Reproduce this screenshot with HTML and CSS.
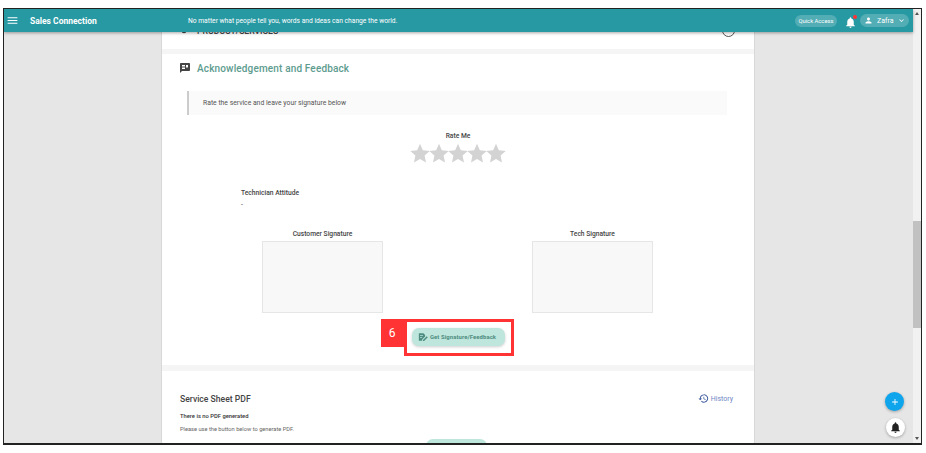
FILE: index.html
```html
<!DOCTYPE html>
<html lang="en">
<head>
    <meta charset="UTF-8">
    <meta name="viewport" content="width=device-width, initial-scale=1.0">
    <title>Sales Connection</title>
    <link rel="stylesheet" href="styles.css">
</head>
<body>
    <div class="frame">
        <div class="viewport">
            <header class="topbar">
                <svg class="menu-icon" viewBox="0 0 24 24"><path d="M3 18h18v-2H3v2zm0-5h18v-2H3v2zm0-7v2h18V6H3z"/></svg>
                <span class="brand">Sales Connection</span>
                <span class="quote">No matter what people tell you, words and ideas can change the world.</span>
                <span class="quick">Quick Access</span>
                <span class="bell">
                    <svg viewBox="0 0 24 24"><path d="M12 22c1.100 0 2-.9 2-2h-4c0 1.100.9 2 2 2zm6-6v-5c0-3.070-1.640-5.640-4.500-6.320V4c0-.830-.670-1.500-1.500-1.500s-1.500.670-1.500 1.500v.680C7.630 5.360 6 7.920 6 11v5l-2 2v1h16v-1l-2-2z"/></svg>
                    <i class="bell-dot"></i>
                </span>
                <span class="user">
                    <svg viewBox="0 0 24 24"><path d="M12 12c2.210 0 4-1.790 4-4s-1.790-4-4-4-4 1.790-4 4 1.790 4 4 4zm0 2c-2.670 0-8 1.340-8 4v2h16v-2c0-2.660-5.330-4-8-4z"/></svg>
                    Zafra
                    <svg viewBox="0 0 24 24"><path d="M7.410 8.590 12 13.170l4.590-4.580L18 10l-6 6-6-6z"/></svg>
                </span>
            </header>

            <main class="page">
                <div class="sheet">
                    <section class="card card-top">
                        <div class="product-title">
                            <svg viewBox="0 0 24 24"><circle cx="12" cy="12" r="7"/></svg>
                            PRODUCT/SERVICES
                            <span class="collapse-btn"></span>
                        </div>
                    </section>

                    <section class="card card-feedback">
                        <h2 class="section-title">
                            <svg viewBox="0 0 24 24"><path d="M20 2H4c-1.100 0-2 .9-2 2v18l4-4h14c1.100 0 2-.9 2-2V4c0-1.100-.9-2-2-2zM6 14v-2h6v2H6zm0-3V9h6v2H6zm0-3V6h6v2H6zm12 3h-4V6h4v5z"/></svg>
                            Acknowledgement and Feedback
                        </h2>
                        <p class="note">Rate the service and leave your signature below</p>

                        <div class="rating">
                            <div class="label">Rate Me</div>
                            <div class="stars">
                                <svg viewBox="0 0 24 24"><path d="M12 1l3.400 7.600 8.300.9-6.200 5.600 1.700 8.200L12 19.100l-7.200 4.200 1.700-8.200L.3 9.500l8.300-.9z"/></svg>
                                <svg viewBox="0 0 24 24"><path d="M12 1l3.400 7.600 8.300.9-6.200 5.600 1.700 8.200L12 19.100l-7.200 4.200 1.700-8.200L.3 9.500l8.300-.9z"/></svg>
                                <svg viewBox="0 0 24 24"><path d="M12 1l3.400 7.600 8.300.9-6.200 5.600 1.700 8.200L12 19.100l-7.200 4.200 1.700-8.200L.3 9.500l8.300-.9z"/></svg>
                                <svg viewBox="0 0 24 24"><path d="M12 1l3.400 7.600 8.300.9-6.200 5.600 1.700 8.200L12 19.100l-7.200 4.200 1.700-8.200L.3 9.500l8.300-.9z"/></svg>
                                <svg viewBox="0 0 24 24"><path d="M12 1l3.400 7.600 8.300.9-6.200 5.600 1.700 8.200L12 19.100l-7.200 4.200 1.700-8.200L.3 9.500l8.300-.9z"/></svg>
                            </div>
                        </div>

                        <div class="attitude">
                            <div class="label">Technician Attitude</div>
                            <div class="dash">-</div>
                        </div>

                        <div class="signatures">
                            <div class="signature">
                                <div class="label">Customer Signature</div>
                                <div class="sign-box"></div>
                            </div>
                            <div class="signature">
                                <div class="label">Tech Signature</div>
                                <div class="sign-box"></div>
                            </div>
                        </div>

                        <div class="action">
                            <div class="callout">
                                <span class="step">6</span>
                                <span class="highlight"></span>
                                <button class="btn">
                                    <svg viewBox="0 0 24 24"><path fill-rule="evenodd" d="M2 3h11l4 4v4l-7 7v3H2V3zm3 5v1.500h7V8H5zm0 4v1.500h5V12H5z"/><path d="M12 19l9-9 2.500 2.500-9 9H12z"/></svg>
                                    Get Signature/Feedback
                                </button>
                            </div>
                        </div>
                    </section>

                    <section class="card card-pdf">
                        <div class="pdf-head">
                            <h3>Service Sheet PDF</h3>
                            <span class="history">
                                <svg viewBox="0 0 24 24"><path d="M13 3a9 9 0 0 0-9 9H1l3.900 3.900L9 12H6a7 7 0 1 1 2.100 4.900l-1.400 1.400A9 9 0 1 0 13 3zm-1 5v5l4.300 2.500.7-1.200-3.500-2.100V8H12z"/></svg>
                                History
                            </span>
                        </div>
                        <div class="pdf-none">There is no PDF generated</div>
                        <div class="pdf-help">Please use the button below to generate PDF.</div>
                        <div class="pdf-action"><span class="pdf-btn"></span></div>
                    </section>
                </div>
            </main>

            <div class="scrollbar"><span class="thumb"></span></div>

            <div class="fabs">
                <span class="fab fab-add">
                    <svg viewBox="0 0 24 24"><path d="M19 13h-6v6h-2v-6H5v-2h6V5h2v6h6v2z"/></svg>
                </span>
                <span class="fab fab-bell">
                    <svg viewBox="0 0 24 24"><path d="M12 22c1.100 0 2-.9 2-2h-4c0 1.100.9 2 2 2zm6-6v-5c0-3.070-1.640-5.640-4.500-6.320V4c0-.830-.670-1.500-1.500-1.500s-1.500.670-1.500 1.500v.680C7.630 5.360 6 7.920 6 11v5l-2 2v1h16v-1l-2-2z"/></svg>
                </span>
            </div>
        </div>
    </div>
</body>
</html>
```

FILE: styles.css
```css
* {
    box-sizing: border-box;
}
body {
    margin: 0;
    height: 453px;
    overflow: hidden;
    background: #fff;
    font-family: 'Roboto', 'Liberation Sans', sans-serif;
    padding: 8px 4px 8px 3px;
}
.frame {
    height: 437px;
    border: 1px solid #222;
    border-bottom-width: 2px;
}
.viewport {
    position: relative;
    height: 100%;
    display: flex;
    overflow: hidden;
    background: #e6e6e6;
}

/* top bar */
.topbar {
    position: absolute;
    top: 0;
    left: 0;
    right: 8px;
    z-index: 2;
    height: 23px;
    display: flex;
    align-items: center;
    background: #2799a3;
    color: #fff;
    box-shadow: 0 1px 3px rgba(0, 0, 0, 0.35);
}
.menu-icon {
    width: 13px;
    height: 13px;
    margin-left: 2px;
    fill: #fff;
}
.brand {
    margin-left: 11px;
    width: 158px;
    font-size: 8.5px;
    font-weight: 700;
}
.quote {
    flex: 1;
    font-size: 6.7px;
}
.quick {
    width: 42px;
    height: 12px;
    line-height: 12px;
    text-align: center;
    font-size: 5.8px;
    border-radius: 6px;
    background: rgba(255, 255, 255, 0.2);
}
.bell {
    position: relative;
    width: 12px;
    height: 13px;
    margin-left: 7px;
}
.bell svg {
    width: 13px;
    height: 13px;
    fill: #fff;
}
.bell-dot {
    position: absolute;
    top: 1px;
    right: -1px;
    width: 4px;
    height: 4px;
    border-radius: 50%;
    background: #f33;
}
.user {
    display: flex;
    align-items: center;
    gap: 4px;
    flex: none;
    width: 49px;
    height: 13px;
    margin: 0 4px 0 4px;
    padding-left: 4px;
    font-size: 7px;
    border-radius: 7px;
    background: rgba(255, 255, 255, 0.2);
}
.user svg {
    width: 9px;
    height: 9px;
    fill: #fff;
}

/* page */
.page {
    flex: 1;
    display: flex;
    justify-content: center;
    padding-right: 1px;
}
.sheet {
    width: 594px;
    flex: none;
    background: #f5f5f5;
    border-left: 1px solid #d8d8d8;
    border-right: 1px solid #d8d8d8;
}
.card {
    background: #fff;
}
.card-top {
    height: 40px;
    margin-bottom: 5px;
    padding: 15px 19px 0 18px;
}
.product-title {
    display: flex;
    align-items: center;
    font-size: 8.6px;
    font-weight: 500;
    color: #444;
    gap: 9px;
}
.product-title svg {
    width: 8px;
    height: 8px;
    fill: #444;
}
.collapse-btn {
    margin-left: auto;
    width: 13px;
    height: 13px;
    border: 1px solid #555;
    border-radius: 50%;
}
.card-feedback {
    height: 311px;
    margin-bottom: 6px;
    padding-top: 8px;
}
.section-title {
    display: flex;
    align-items: center;
    gap: 6px;
    margin: 0 0 0 17px;
    font-size: 10px;
    font-weight: 500;
    letter-spacing: 0.15px;
    color: #5d9c8f;
}
.section-title svg {
    width: 12px;
    height: 12px;
    fill: #444;
}
.note {
    margin: 17px 27px 0 25px;
    height: 24px;
    line-height: 24px;
    padding-left: 14px;
    font-size: 6.8px;
    color: #555;
    background: #fafafa;
    border-left: 2px solid #ccc;
}
.label {
    font-size: 6.7px;
    font-weight: 500;
    color: #444;
}
.rating {
    margin-top: 17px;
    text-align: center;
}
.stars {
    display: flex;
    justify-content: center;
    margin-top: 3px;
}
.stars svg {
    width: 20px;
    height: 20px;
    margin: 0 -0.5px;
    fill: #d3d3d3;
}
.attitude {
    margin: 26px 0 0 79px;
}
.dash {
    margin-top: 4px;
    font-size: 7px;
    color: #444;
}
.signatures {
    display: flex;
    justify-content: space-between;
    margin: 21px 101px 0 100px;
}
.signature {
    width: 121px;
    text-align: center;
}
.sign-box {
    height: 72px;
    margin-top: 3px;
    background: #f8f8f8;
    border: 1px solid #e6e6e6;
}
.action {
    display: flex;
    justify-content: center;
    margin-top: 15px;
}
.callout {
    position: relative;
}
.btn {
    display: flex;
    align-items: center;
    justify-content: center;
    gap: 2px;
    width: 93px;
    height: 18px;
    padding: 0 2px 0 0;
    border: 0;
    border-radius: 7px;
    font-family: inherit;
    font-size: 5.9px;
    font-weight: 700;
    letter-spacing: 0.1px;
    color: #4d8c80;
    background: #bfe6dc;
    box-shadow: 0 1px 3px rgba(0, 0, 0, 0.2);
}
.btn svg {
    width: 10px;
    height: 10px;
    fill: #4d8c80;
}
.highlight {
    position: absolute;
    top: -9px;
    left: -8px;
    right: -9px;
    bottom: -10px;
    border: 3px solid #ff3333;
}
.step {
    position: absolute;
    top: -9px;
    left: -31px;
    width: 23px;
    height: 28px;
    line-height: 28px;
    text-align: center;
    font-size: 12px;
    color: #fff;
    background: #ff3333;
}
.card-pdf {
    height: 120px;
    padding: 22px 21px 0 18px;
    position: relative;
}
.pdf-head {
    display: flex;
    align-items: center;
    justify-content: space-between;
}
.pdf-head h3 {
    margin: 0;
    font-size: 8.6px;
    font-weight: 500;
    color: #444;
}
.history {
    display: flex;
    align-items: center;
    gap: 2px;
    font-size: 7px;
    color: #6f86c4;
}
.history svg {
    width: 11px;
    height: 11px;
    fill: #3d5a9e;
}
.pdf-none {
    margin-top: 9px;
    font-size: 5.8px;
    font-weight: 500;
    color: #333;
}
.pdf-help {
    margin-top: 7px;
    font-size: 5.7px;
    color: #666;
}
.pdf-action {
    display: flex;
    justify-content: center;
    margin-top: 7px;
}
.pdf-btn {
    width: 61px;
    height: 19px;
    border-radius: 7px;
    background: #bfe6dc;
}

/* scrollbar and round buttons */
.scrollbar {
    position: relative;
    width: 8px;
    flex: none;
    background: #f1f1f1;
    padding-top: 212px;
}
.scrollbar::before,
.scrollbar::after {
    content: "";
    position: absolute;
    left: 2px;
    border-left: 2px solid transparent;
    border-right: 2px solid transparent;
}
.scrollbar::before {
    top: 3px;
    border-bottom: 3px solid #555;
}
.scrollbar::after {
    bottom: 3px;
    border-top: 3px solid #555;
}
.thumb {
    display: block;
    height: 107px;
    background: #c1c1c1;
}
.fabs {
    position: absolute;
    right: 16px;
    bottom: 6px;
    display: flex;
    flex-direction: column;
    align-items: center;
    gap: 7px;
}
.fab {
    display: flex;
    align-items: center;
    justify-content: center;
    width: 19px;
    height: 19px;
    border-radius: 50%;
    box-shadow: 0 1px 3px rgba(0, 0, 0, 0.3);
}
.fab svg {
    width: 10px;
    height: 10px;
}
.fab-add {
    background: #0ea5ec;
    fill: #fff;
}
.fab-bell {
    margin-left: 2px;
    background: #fff;
    fill: #222;
}
.fab-bell svg {
    width: 13px;
    height: 13px;
}
```
